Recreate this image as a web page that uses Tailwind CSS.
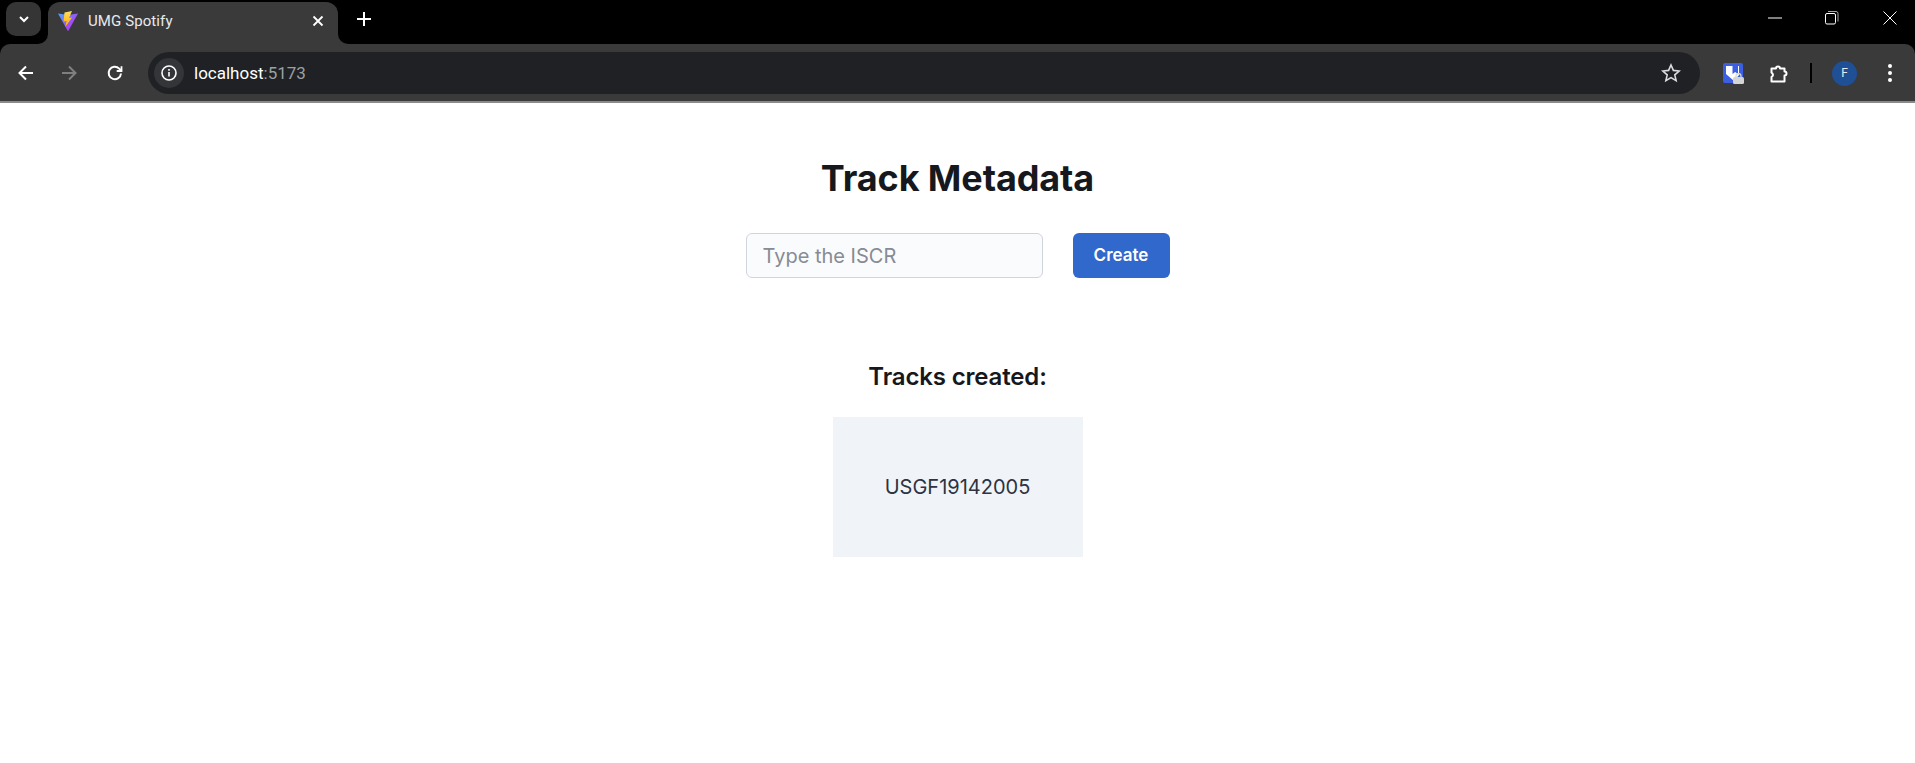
<!DOCTYPE html>
<html lang="en">
<head>
    <meta charset="UTF-8">
    <meta name="viewport" content="width=device-width, initial-scale=1.0">
    <title>UMG Spotify</title>
    <script src="https://cdn.jsdelivr.net/npm/@tailwindcss/browser@4"></script>
</head>
<body class="bg-white h-screen overflow-hidden font-['Inter',sans-serif]">
    <!-- tab strip -->
    <div class="bg-black h-[44px] flex items-start relative">
        <button class="ml-[6px] mt-[2px] w-[35px] h-[34px] rounded-[10px] bg-[#353535] flex items-center justify-center">
            <svg width="12" height="12" viewBox="0 0 12 12" fill="none" stroke="#fff" stroke-width="2"><path d="M2 4l4 4 4-4"/></svg>
        </button>
        <div class="relative ml-[7px] mt-[2px] w-[290px] h-[42px] bg-[#3a3a3a] rounded-t-[12px] flex items-center pl-[10px] pr-[14px] pb-[4px]">
            <svg class="absolute left-[-10px] bottom-0" width="10" height="10" viewBox="0 0 10 10"><path d="M10 0v10H0a10 10 0 0 0 10-10z" fill="#3a3a3a"/></svg>
            <svg class="absolute right-[-10px] bottom-0" width="10" height="10" viewBox="0 0 10 10"><path d="M0 0v10h10A10 10 0 0 1 0 0z" fill="#3a3a3a"/></svg>
            <svg width="20" height="20" viewBox="0 0 20 20">
                <defs>
                    <linearGradient id="vite" x1="0" y1="0" x2="1" y2="1"><stop offset="0" stop-color="#4aa8ff"/><stop offset=".6" stop-color="#a04cf5"/><stop offset="1" stop-color="#bd34fe"/></linearGradient>
                    <linearGradient id="bolt" x1="0" y1="0" x2="0" y2="1"><stop offset="0" stop-color="#ffe05a"/><stop offset="1" stop-color="#ffa800"/></linearGradient>
                </defs>
                <path d="M0 2.500L10 4 20 2.500 10.500 19.500a.6.6 0 0 1-1 0z" fill="url(#vite)"/>
                <path d="M14 0L6.500 1.500 5.500 10.500l3-.5-1.200 6L14 6.500l-3 .5z" fill="url(#bolt)"/>
            </svg>
            <span class="ml-[10px] text-[15px] tracking-[0.1px] text-[#e8eaed] font-['Roboto',sans-serif] flex-1">UMG Spotify</span>
            <svg width="12" height="12" viewBox="0 0 12 12" stroke="#fff" stroke-width="1.8"><path d="M1.500 1.500l9 9M10.500 1.500l-9 9"/></svg>
        </div>
        <svg class="ml-[19px] mt-[12px]" width="14" height="14" viewBox="0 0 14 14" stroke="#fff" stroke-width="2"><path d="M7 0v14M0 7h14"/></svg>
        <div class="ml-auto flex items-start translate-x-[4px]">
            <div class="w-[58px] h-[36px] flex items-center justify-center pl-[2px]"><svg width="14" height="2" viewBox="0 0 14 2"><path d="M0 1h14" stroke="#fff" stroke-width="1"/></svg></div>
            <div class="w-[58px] h-[36px] flex items-center justify-center"><svg width="14" height="14" viewBox="0 0 14 14" fill="none" stroke="#fff"><rect x=".5" y="2.500" width="10" height="10.500" rx="1.500"/><path d="M3 .5h8a2 2 0 0 1 2 2v8" stroke="#aaa"/></svg></div>
            <div class="w-[58px] h-[36px] flex items-center justify-center"><svg width="14" height="14" viewBox="0 0 14 14" stroke="#fff"><path d="M.5.5l13 13M13.500.5l-13 13"/></svg></div>
        </div>
    </div>
    <!-- toolbar -->
    <div class="bg-black">
        <div class="h-[57px] bg-[#3a3a3a] rounded-t-[10px] flex items-center pl-[17px] pr-[18px] pt-[1px]">
            <svg width="18" height="18" viewBox="0 0 18 18" fill="none" stroke="#fff" stroke-width="2"><path d="M16 9H3M9 2.500L2.500 9 9 15.500"/></svg>
            <svg class="ml-[25px]" width="18" height="18" viewBox="0 0 18 18" fill="none" stroke="#7f7f7f" stroke-width="2"><path d="M2 9h13M9 2.500L15.500 9 9 15.500"/></svg>
            <svg class="ml-[28px]" width="18" height="18" viewBox="0 0 18 18" fill="none" stroke="#fff" stroke-width="2"><path d="M15 9.500A6.200 6.200 0 1 1 13.200 4.600L15.500 7"/><path d="M15.500 2.200V7h-4.800" stroke-width="1.800"/></svg>
            <div class="ml-[24px] h-[42px] w-[1552px] rounded-full bg-[#202124] flex items-center pl-[6px] pr-[19px]">
                <div class="w-[30px] h-[30px] rounded-full bg-[#343538] flex items-center justify-center">
                    <svg width="16" height="16" viewBox="0 0 16 16" fill="none" stroke="#fff" stroke-width="1.600"><circle cx="8" cy="8" r="7"/><path d="M8 7v4.500M8 4v1.800"/></svg>
                </div>
                <span class="ml-[10px] pt-[1px] text-[17px] text-white font-['Roboto',sans-serif]">localhost<span class="text-[#9aa0a6]">:5173</span></span>
                <svg class="ml-auto" width="20" height="20" viewBox="0 0 20 20" fill="none" stroke="#dadce0" stroke-width="1.600"><path d="M10 2l2.400 5.400 5.800.6-4.400 3.900 1.300 5.700-5.100-3-5.100 3 1.300-5.700L1.800 8l5.800-.6z"/></svg>
            </div>
            <div class="ml-[23px] w-[20px] h-[20px] relative bg-[#3b5fe0] rounded-[2px]">
                <svg class="absolute left-0 top-0" width="20" height="20" viewBox="0 0 20 20"><path d="M3 3h13v9l-5 6-8-7z" fill="#fff"/><path d="M9.500 3H15v8l-2.800-2-2.700 2z" fill="#3b5fe0"/></svg>
                <svg class="absolute right-[-1px] bottom-[-1px]" width="11" height="11" viewBox="0 0 11 11"><rect x="0" y="4" width="11" height="7" rx="1.500" fill="#d5d5d5"/><path d="M3 4.500V3a2.500 2.500 0 0 1 5 0v1.500" fill="none" stroke="#d5d5d5" stroke-width="1.300"/></svg>
            </div>
            <svg class="ml-[26px]" width="20" height="20" viewBox="0 0 20 20" fill="none" stroke="#fff" stroke-width="2"><path d="M2.500 5.500H7a2 2 0 0 1 4 0h4.500v3a2 2 0 0 1 0 4v6h-13V14q3-2 0-4.500z" stroke-linejoin="round"/></svg>
            <div class="ml-[21px] w-[2px] h-[20px] bg-black"></div>
            <div class="ml-[20px] w-[25px] h-[25px] rounded-full bg-[#1f5096] flex items-center justify-center text-[12px] text-[#e8eaed] font-['Roboto',sans-serif]">F</div>
            <div class="ml-[31px] flex flex-col gap-[3px]">
                <div class="w-[4px] h-[4px] rounded-full bg-white"></div>
                <div class="w-[4px] h-[4px] rounded-full bg-white"></div>
                <div class="w-[4px] h-[4px] rounded-full bg-white"></div>
            </div>
        </div>
    </div>
    <div class="h-[2px] bg-[#8a8a8a]"></div>
    <!-- page -->
    <main class="flex flex-col items-center">
        <h1 class="mt-[53px] text-[36px] leading-[44px] font-bold text-[#16181d] tracking-[-0.1px]">Track Metadata</h1>
        <div class="mt-[33px] flex gap-[30px]">
            <input type="text" placeholder="Type the ISCR" class="w-[297px] h-[45px] px-[16px] bg-[#fafbfd] border border-[#d0d4de] rounded-[6px] text-[20px] placeholder:text-[#868b94] outline-none">
            <button class="w-[97px] h-[45px] bg-[#3068cc] text-white rounded-[6px] text-[17px] font-semibold">Create</button>
        </div>
        <h2 class="mt-[83px] text-[24px] leading-[32px] font-semibold text-[#16181d] tracking-[-0.16px]">Tracks created:</h2>
        <div class="mt-[24px] w-[250px] h-[140px] bg-[#f0f4f9] flex items-center justify-center text-[20px] text-[#2d3340]">USGF19142005</div>
    </main>
</body>
</html>
